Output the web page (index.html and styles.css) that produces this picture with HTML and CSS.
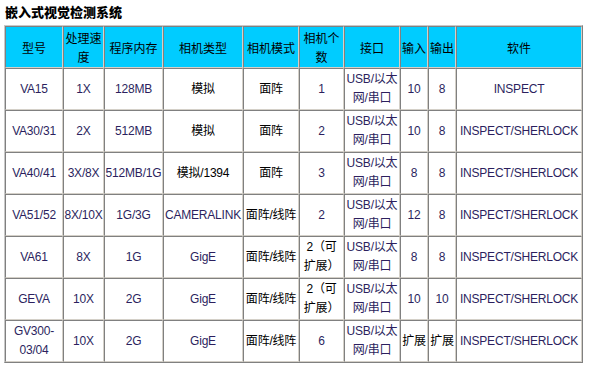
FILE: index.html
```html
<!DOCTYPE html>
<html lang="zh">
<head>
<meta charset="utf-8">
<title>嵌入式视觉检测系统</title>
<link rel="stylesheet" href="styles.css">
</head>
<body>
<h1 class="title">嵌入式视觉检测系统</h1>
<table class="spec">
  <thead>
    <tr>
      <th class="c1">型号</th>
      <th class="c2">处理速度</th>
      <th class="c3">程序内存</th>
      <th class="c4">相机类型</th>
      <th class="c5">相机模式</th>
      <th class="c6">相机个数</th>
      <th class="c7">接口</th>
      <th class="c8">输入</th>
      <th class="c9">输出</th>
      <th class="c10">软件</th>
    </tr>
  </thead>
  <tbody>
    <tr><td>VA15</td><td>1X</td><td>128MB</td><td class="zh">模拟</td><td class="zh">面阵</td><td>1</td><td>USB/以太网/串口</td><td>10</td><td>8</td><td>INSPECT</td></tr>
    <tr><td>VA30/31</td><td>2X</td><td>512MB</td><td class="zh">模拟</td><td class="zh">面阵</td><td>2</td><td>USB/以太网/串口</td><td>10</td><td>8</td><td>INSPECT/SHERLOCK</td></tr>
    <tr><td>VA40/41</td><td>3X/8X</td><td>512MB/1G</td><td class="zh">模拟/1394</td><td class="zh">面阵</td><td>3</td><td>USB/以太网/串口</td><td>8</td><td>8</td><td>INSPECT/SHERLOCK</td></tr>
    <tr><td>VA51/52</td><td>8X/10X</td><td>1G/3G</td><td>CAMERALINK</td><td class="zh">面阵/线阵</td><td>2</td><td>USB/以太网/串口</td><td>12</td><td>8</td><td>INSPECT/SHERLOCK</td></tr>
    <tr><td>VA61</td><td>8X</td><td>1G</td><td>GigE</td><td class="zh">面阵/线阵</td><td class="zh">2（可<br>扩展）</td><td>USB/以太网/串口</td><td>8</td><td>8</td><td>INSPECT/SHERLOCK</td></tr>
    <tr><td>GEVA</td><td>10X</td><td>2G</td><td>GigE</td><td class="zh">面阵/线阵</td><td class="zh">2（可<br>扩展）</td><td>USB/以太网/串口</td><td>10</td><td>10</td><td>INSPECT/SHERLOCK</td></tr>
    <tr><td>GV300-03/04</td><td>10X</td><td>2G</td><td>GigE</td><td class="zh">面阵/线阵</td><td>6</td><td>USB/以太网/串口</td><td class="zh">扩展</td><td class="zh">扩展</td><td>INSPECT/SHERLOCK</td></tr>
  </tbody>
</table>
</body>
</html>
```
FILE: styles.css
```css
html, body {
  margin: 0;
  padding: 0;
  background: #ffffff;
}
body {
  padding: 4px 0 0 4px;
  font-family: "Liberation Sans", Arial, "Noto Sans CJK SC", sans-serif;
  font-size: 12px;
  color: #000;
}
.title {
  margin: 0;
  height: 21px;
  font-size: 13px;
  line-height: 16px;
  font-weight: 900;
  font-family: "Noto Sans CJK SC", sans-serif;
  padding-left: 1px;
}
.spec {
  table-layout: fixed;
  width: 579px;
  border-collapse: separate;
  border-spacing: 0;
  border: 1px solid;
  border-color: #c8c8c8 #808080 #808080 #c8c8c8;
}
.spec th,
.spec td {
  box-sizing: border-box;
  height: 42px;
  padding: 0;
  border: 1px solid;
  border-color: #808080 #d4d0c8 #d4d0c8 #808080;
  text-align: center;
  vertical-align: middle;
  line-height: 19px;
  white-space: normal;
}
.spec th {
  background: #00ccff;
  font-weight: normal;
  color: #000;
  font-size: 12px;
  font-family: "Noto Sans CJK SC", sans-serif;
}
.spec td {
  color: #2c1f5e;
  letter-spacing: -0.2px;
}
.spec td.zh {
  color: #000;
}
.c1 { width: 58px; }
.c2 { width: 41px; }
.c3 { width: 59px; }
.c4 { width: 80px; }
.c5 { width: 56px; }
.c6 { width: 45px; }
.c7 { width: 56px; }
.c8 { width: 28px; }
.c9 { width: 28px; }
.c10 { width: 126px; }
```
